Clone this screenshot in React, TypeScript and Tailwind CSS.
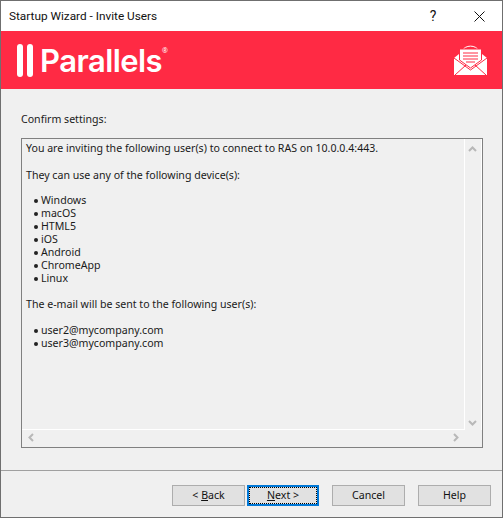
const devices = ['Windows', 'macOS', 'HTML5', 'iOS', 'Android', 'ChromeApp', 'Linux'];
const users = ['user2@mycompany.com', 'user3@mycompany.com'];

function Bullets({ items, first }: { items: string[]; first?: boolean }) {
  return (
    <ul className={first ? 'mt-[12px] flex flex-col' : 'mt-[13px] flex flex-col'}>
      {items.map(item => (
        <li key={item} className="flex h-[13px] items-center pl-[8px]">
          <span className="mr-[3px] h-[4px] w-[4px] rounded-full bg-[#222]" />
          {item}
        </li>
      ))}
    </ul>
  );
}

function Button({ children, active }: { children: React.ReactNode; active?: boolean }) {
  return (
    <button
      className={
        active
          ? 'flex h-[21px] w-[72px] items-center justify-center border-2 border-[#0078d7] bg-[#e1e1e1] outline-1 -outline-offset-3 outline-dotted outline-black text-[#111]'
          : 'flex h-[21px] w-[73px] items-center justify-center border border-[#adadad] bg-[#e1e1e1] text-[#111]'
      }
    >
      {children}
    </button>
  );
}

function EnvelopeIcon() {
  return (
    <svg width="33" height="30" viewBox="0 0 33 30">
      <path d="M8 6 C11 -0.500 22 -0.500 25 6" fill="none" stroke="#fff" strokeWidth="1" />
      {/* body and flap sides */}
      <path d="M0 13 L5 9 H28 L33 13 V30 H0 Z" fill="#fff" />
      {/* letter */}
      <path d="M5.500 4 H27.500 V15 L16.500 23 L5.500 15 Z" fill="#fff" stroke="#ff2a44" strokeWidth="1" />
      <path d="M9 8 H24 M9 11 H24 M9 14 H24 M12 17 H21" stroke="#ff2a44" strokeWidth="1" />
      {/* fold lines */}
      <path d="M0 13 L16.500 25 L33 13" fill="none" stroke="#ff2a44" strokeWidth="1" />
      <path d="M1 30 L12 20 M32 30 L21 20" fill="none" stroke="#ff2a44" strokeWidth="1" />
    </svg>
  );
}

export default function App() {
  return (
    <div className="flex h-[518px] w-[503px] flex-col overflow-hidden border border-[#6f6f6f] bg-[#f0f0f0] font-['Noto_Sans',sans-serif] text-[10.600px] text-[#1a1a1a]">
      {/* Title bar */}
      <div className="flex h-[30px] shrink-0 items-center bg-white pl-[8px] pt-[1px] font-['Roboto',sans-serif] text-[11.800px] text-[#111]">
        <span className="flex-1">Startup Wizard - Invite Users</span>
        <span className="w-[46px] text-center text-[14px]">?</span>
        <span className="flex w-[46px] justify-center">
          <svg width="11" height="11" viewBox="0 0 11 11" stroke="#111" strokeWidth="1">
            <path d="M0.500 0.500 L10.500 10.500 M10.500 0.500 L0.500 10.500" />
          </svg>
        </span>
      </div>

      {/* Banner */}
      <div className="flex h-[58px] shrink-0 items-center bg-[#ff2a44] pl-[16px] pr-[15px]">
        <span className="h-[33px] w-[6px] rounded-full bg-white" />
        <span className="ml-[4px] h-[33px] w-[6px] rounded-full bg-white" />
        <span className="ml-[7px] font-['Inter',sans-serif] text-[31px] font-semibold leading-none tracking-[-0.550px] text-white">
          Parallels
        </span>
        <span className="mb-[18px] font-['Noto_Sans',sans-serif] text-[7px] text-white">®</span>
        <span className="flex-1" />
        <EnvelopeIcon />
      </div>

      {/* Content */}
      <div className="flex flex-1 flex-col px-[20px] pt-[24px]">
        <div className="h-[13px] leading-[13px]">Confirm settings:</div>
        <div className="mt-[12px] mr-[-1px] flex h-[310px] flex-col border border-[#808080]">
          <div className="flex min-h-0 flex-1">
            <div className="flex-1 border-b border-r border-white pl-[4px] pt-[3px] leading-[13px]">
              <div>You are inviting the following user(s) to connect to RAS on 10.0.0.4:443.</div>
              <div className="mt-[14px]">They can use any of the following device(s):</div>
              <Bullets items={devices} first />
              <div className="mt-[13px]">The e-mail will be sent to the following user(s):</div>
              <Bullets items={users} />
            </div>
            <div className="flex w-[17px] flex-col items-center justify-between border-r border-white pt-[7px] pb-[4px] pr-[1px]">
              <svg width="9" height="6" viewBox="0 0 9 6" fill="none" stroke="#b8b8b8" strokeWidth="2"><path d="M1 5 L4.500 1.500 L8 5" /></svg>
              <svg width="9" height="6" viewBox="0 0 9 6" fill="none" stroke="#b8b8b8" strokeWidth="2"><path d="M1 1 L4.500 4.500 L8 1" /></svg>
            </div>
          </div>
          <div className="flex h-[17px] items-center justify-between pb-[2px] pl-[6px] pr-[23px]">
            <svg width="6" height="9" viewBox="0 0 6 9" fill="none" stroke="#b8b8b8" strokeWidth="2"><path d="M5 1 L1.500 4.500 L5 8" /></svg>
            <svg width="6" height="9" viewBox="0 0 6 9" fill="none" stroke="#b8b8b8" strokeWidth="2"><path d="M1 1 L4.500 4.500 L1 8" /></svg>
          </div>
        </div>
      </div>

      {/* Footer */}
      <div className="flex h-[47px] shrink-0 items-start border-t border-[#a0a0a0] pl-[171px] pt-[14px]">
        <Button>
          &lt;&nbsp;<u>B</u>ack
        </Button>
        <span className="w-[2px]" />
        <Button active>
          <u>N</u>ext &gt;
        </Button>
        <span className="w-[13px]" />
        <Button>Cancel</Button>
        <span className="w-[13px]" />
        <Button>Help</Button>
      </div>
    </div>
  );
}
